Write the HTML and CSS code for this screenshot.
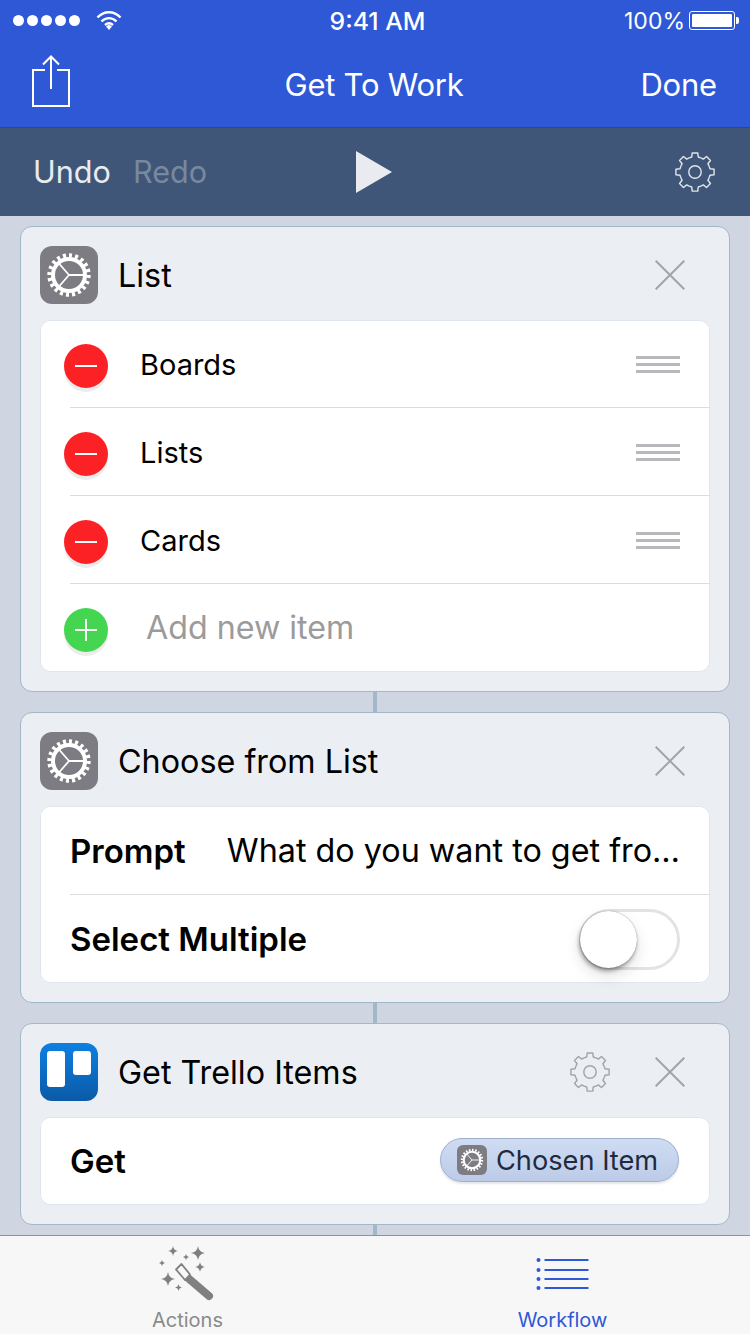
FILE: index.html
```html
<!DOCTYPE html>
<html lang="en">
<head>
    <meta charset="UTF-8">
    <meta name="viewport" content="width=device-width, initial-scale=1.0">
    <title>Get To Work</title>
    <link rel="stylesheet" href="styles.css">
</head>
<body>
    <svg class="defs">
        <symbol id="cog" viewBox="-22 -22 44 44">
            <g fill="none" stroke="currentColor" stroke-width="1.5" stroke-linejoin="round">
                <path id="tooth" d="M-6.12-14.78 -3.4-15.7-2.9-20 2.9-20 3.4-15.7 6.12-14.78"/>
                <use href="#tooth" transform="rotate(45)"/>
                <use href="#tooth" transform="rotate(90)"/>
                <use href="#tooth" transform="rotate(135)"/>
                <use href="#tooth" transform="rotate(180)"/>
                <use href="#tooth" transform="rotate(225)"/>
                <use href="#tooth" transform="rotate(270)"/>
                <use href="#tooth" transform="rotate(315)"/>
                <circle r="6.5"/>
            </g>
        </symbol>
        <symbol id="app-gear" viewBox="-29 -29 58 58">
            <rect x="-29" y="-29" width="58" height="58" rx="12" fill="#7d7c82"/>
            <g fill="none" stroke="#fff">
                <circle r="16" stroke-width="4"/>
                <circle r="19.5" stroke-width="4.4" pathLength="40" stroke-dasharray="1 1"/>
                <path d="M0 0H15M0 0-10-11.5M0 0-10 11.5" stroke-width="1.8"/>
            </g>
        </symbol>
        <symbol id="close" viewBox="0 0 30 30">
            <path d="M.7.7 29.3 29.3M29.3.7.7 29.3" fill="none" stroke="#a4a4a6" stroke-width="2"/>
        </symbol>
        <symbol id="handle" viewBox="0 0 44 18">
            <path d="M0 1.5H44M0 8.5H44M0 15.5H44" stroke="#b8b7bc" stroke-width="3"/>
        </symbol>
        <symbol id="spark" viewBox="-1 -1 2 2">
            <path d="M0-1Q.12-.12 1 0 .12 .12 0 1-.12 .12-1 0-.12-.12 0-1Z" fill="#808080"/>
        </symbol>
    </svg>

    <div class="screen">
        <header class="topbar">
            <div class="status">
                <div class="status-left">
                    <div class="signal"><i></i><i></i><i></i><i></i><i></i></div>
                    <svg class="wifi" width="26" height="19" viewBox="0 0 26 19">
                        <path d="M1.5 6.5C8-.5 18-.5 24.5 6.5M5.5 10.5C10 6 16 6 20.5 10.5M9 14C11.5 11.8 14.5 11.8 17 14" fill="none" stroke="#fff" stroke-width="2.4"/>
                        <path d="M10 15.5 13 13.5 16 15.5 13 19Z" fill="#fff"/>
                    </svg>
                </div>
                <div class="clock">9:41 AM</div>
                <div class="status-right">
                    <span>100%</span>
                    <div class="battery"><b></b></div>
                    <div class="battery-cap"></div>
                </div>
            </div>
            <nav class="nav">
                <svg class="share" width="40" height="53" viewBox="0 0 40 53">
                    <path d="M13 15H1V51H37V15H25M19 34V2M11 9.5 19 1.5 27 9.5" fill="none" stroke="#fff" stroke-width="2"/>
                </svg>
                <div class="nav-title">Get To Work</div>
                <div class="nav-done">Done</div>
            </nav>
        </header>

        <div class="toolbar">
            <div class="history"><span>Undo</span><span class="off">Redo</span></div>
            <div class="play"></div>
            <svg class="tool-cog" width="42" height="42"><use href="#cog"/></svg>
        </div>

        <main class="flow">
            <section class="card">
                <div class="card-head">
                    <svg class="app" width="58" height="58"><use href="#app-gear"/></svg>
                    <h2>List</h2>
                    <svg class="x" width="30" height="30"><use href="#close"/></svg>
                </div>
                <div class="body">
                    <div class="row item">
                        <span class="dot minus"></span><span class="item-name">Boards</span>
                        <svg class="handle" width="44" height="18"><use href="#handle"/></svg>
                    </div>
                    <div class="row item">
                        <span class="dot minus"></span><span class="item-name">Lists</span>
                        <svg class="handle" width="44" height="18"><use href="#handle"/></svg>
                    </div>
                    <div class="row item">
                        <span class="dot minus"></span><span class="item-name">Cards</span>
                        <svg class="handle" width="44" height="18"><use href="#handle"/></svg>
                    </div>
                    <div class="row item">
                        <span class="dot plus"></span><span class="item-new">Add new item</span>
                    </div>
                </div>
            </section>
            <div class="link"></div>

            <section class="card">
                <div class="card-head">
                    <svg class="app" width="58" height="58"><use href="#app-gear"/></svg>
                    <h2>Choose from List</h2>
                    <svg class="x" width="30" height="30"><use href="#close"/></svg>
                </div>
                <div class="body">
                    <div class="row field tall">
                        <span class="label">Prompt</span>
                        <span class="prompt">What do you want to get fro…</span>
                    </div>
                    <div class="row field">
                        <span class="label">Select Multiple</span>
                        <div class="toggle"><div class="knob"></div></div>
                    </div>
                </div>
            </section>
            <div class="link"></div>

            <section class="card">
                <div class="card-head">
                    <svg class="app" width="58" height="58" viewBox="0 0 58 58">
                        <defs>
                            <linearGradient id="trello" x1="0" y1="0" x2="0" y2="1">
                                <stop offset="0" stop-color="#0d80e2"/>
                                <stop offset="1" stop-color="#0b5aa6"/>
                            </linearGradient>
                        </defs>
                        <rect width="58" height="58" rx="12" fill="url(#trello)"/>
                        <rect x="7" y="8" width="18" height="36" rx="3" fill="#fff"/>
                        <rect x="33" y="8" width="18" height="24" rx="3" fill="#fff"/>
                    </svg>
                    <h2>Get Trello Items</h2>
                    <svg class="head-cog" width="42" height="42"><use href="#cog"/></svg>
                    <svg class="x" width="30" height="30"><use href="#close"/></svg>
                </div>
                <div class="body">
                    <div class="row field">
                        <span class="label">Get</span>
                        <div class="pill">
                            <svg width="30" height="30"><use href="#app-gear"/></svg>
                            <span>Chosen Item</span>
                        </div>
                    </div>
                </div>
            </section>
            <div class="link"></div>
        </main>

        <footer class="tabs">
            <div class="tab">
                <svg width="65" height="60" viewBox="0 0 65 60">
                    <use href="#spark" x="13" y="1" width="10" height="10"/>
                    <use href="#spark" x="36" y="1" width="14" height="14"/>
                    <use href="#spark" x="40" y="17" width="10" height="10"/>
                    <use href="#spark" x="6" y="27" width="14" height="14"/>
                    <use href="#spark" x="20" y="39" width="7" height="7"/>
                    <use href="#spark" x="4" y="15" width="6" height="6"/>
                    <use href="#spark" x="28" y="9" width="6" height="6"/>
                    <path d="M33 33 54 51" fill="none" stroke="#808080" stroke-width="8" stroke-linecap="round"/>
                    <path d="M21 24.5 26.5 19 35 29.5 30 35Z" fill="#f7f7f7" stroke="#808080" stroke-width="1.8" stroke-linejoin="round"/>
                </svg>
                <span>Actions</span>
            </div>
            <div class="tab on">
                <svg width="65" height="60" viewBox="0 0 52 60">
                    <g fill="#2e58d6">
                        <circle cx="2" cy="15" r="2"/>
                        <circle cx="2" cy="25" r="2"/>
                        <circle cx="2" cy="34" r="2"/>
                        <circle cx="2" cy="43" r="2"/>
                    </g>
                    <path d="M8 15H52M8 25H52M8 34H52M8 43H52" stroke="#2e58d6" stroke-width="2"/>
                </svg>
                <span>Workflow</span>
            </div>
        </footer>
    </div>
</body>
</html>
```

FILE: styles.css
```css
* {
    box-sizing: border-box;
}

body {
    margin: 0;
    font-family: Inter, "Noto Sans", sans-serif;
    color: #000;
}

.defs {
    display: none;
}

.screen {
    width: 750px;
    height: 1334px;
    display: flex;
    flex-direction: column;
    overflow: hidden;
    background: #cfd6e1;
}

.topbar {
    height: 128px;
    background: #2e58d6;
    border-bottom: 1px solid #27489f;
    color: #fff;
}

.status {
    height: 40px;
    padding: 0 11px 0 13px;
    display: flex;
    align-items: center;
    justify-content: space-between;
}

.status-left {
    width: 240px;
    display: flex;
    align-items: center;
}

.signal {
    display: flex;
    gap: 3px;
}

.signal i {
    width: 11px;
    height: 11px;
    border-radius: 50%;
    background: #fff;
}

.wifi {
    margin-left: 16px;
}

.clock {
    margin-top: 2px;
    margin-left: 3px;
    font-size: 24.8px;
    font-weight: 500;
}

.status-right {
    width: 240px;
    display: flex;
    align-items: center;
    justify-content: flex-end;
}

.status-right span {
    margin-top: 2px;
    font-size: 23px;
}

.battery {
    width: 46px;
    height: 19px;
    margin-left: 4px;
    padding: 2px;
    border: 1px solid #fff;
    border-radius: 3px;
}

.battery b {
    display: block;
    height: 100%;
    background: #fff;
    border-radius: 1px;
}

.battery-cap {
    width: 3px;
    height: 7px;
    margin-left: 1px;
    background: #fff;
    border-radius: 0 2px 2px 0;
}

.nav {
    height: 87px;
    padding: 0 33px 0 31px;
    display: grid;
    grid-template-columns: 1fr auto 1fr;
    align-items: center;
    font-size: 31px;
}

.share {
    margin-top: -4px;
    margin-left: 1px;
}

.nav-title {
    margin-top: 2px;
    letter-spacing: -0.25px;
}

.nav-done {
    margin-top: 2px;
    justify-self: end;
    letter-spacing: -0.2px;
}

.toolbar {
    height: 88px;
    padding: 0 34px;
    display: grid;
    grid-template-columns: 1fr auto 1fr;
    align-items: center;
    background: #3f5678;
    color: #e9ebf0;
    font-size: 30.6px;
}

.history {
    margin-top: -2px;
    margin-left: -1px;
    display: flex;
    gap: 22px;
}

.off {
    color: #78899f;
}

.play {
    width: 0;
    height: 0;
    margin-left: -2px;
    border-left: 36px solid #e9ebf0;
    border-top: 21px solid transparent;
    border-bottom: 21px solid transparent;
}

.tool-cog {
    justify-self: end;
    color: #dfe3ea;
}

.flow {
    flex: 1;
    min-height: 0;
    overflow: hidden;
    padding: 10px 20px 0;
}

.card {
    background: #ebeef3;
    border: 1px solid #a3b7c8;
    border-radius: 12px;
    padding: 0 19px 19px;
}

.link {
    width: 4px;
    height: 20px;
    margin: 0 auto;
    background: #a3b7c8;
}

.card-head {
    height: 93px;
    padding-top: 19px;
    padding-bottom: 16px;
    display: flex;
    align-items: center;
}

.card-head h2 {
    flex: 1;
    margin: 0 0 0 20px;
    font-size: 32.3px;
    font-weight: 400;
}

.app {
    flex: none;
}

.x {
    margin-right: 25px;
}

.head-cog {
    margin-right: 44px;
    color: #a4a4a6;
}

.body {
    background: #fff;
    border-radius: 10px;
    box-shadow: inset 0 0 0 1px #dfe5ec;
}

.row {
    height: 88px;
    display: flex;
    align-items: center;
    position: relative;
}

.row + .row::before {
    content: "";
    position: absolute;
    top: -1px;
    left: 30px;
    right: 0;
    height: 1px;
    background: #dcdcde;
}

.item {
    padding: 0 30px 0 24px;
}

.dot {
    flex: none;
    width: 44px;
    height: 44px;
    margin-top: 4px;
    border-radius: 50%;
    position: relative;
    box-shadow: 0 4px 0 #ececec;
}

.minus {
    background: #fc2125;
}

.plus {
    background: #44d551;
}

.dot::before {
    content: "";
    position: absolute;
    top: 21px;
    left: 11px;
    width: 22px;
    height: 2px;
    background: #fff;
}

.plus::after {
    content: "";
    position: absolute;
    top: 11px;
    left: 21px;
    width: 2px;
    height: 22px;
    background: #fff;
}

.item-name {
    flex: 1;
    margin-left: 32px;
    font-size: 29px;
}

.handle {
    margin-top: 2px;
}

.item-new {
    margin-left: 38px;
    margin-top: -2px;
    font-size: 32.2px;
    color: #9b9b9b;
}

.field {
    padding: 0 30px;
    justify-content: space-between;
}

.tall {
    height: 89px;
}

.label {
    font-size: 33px;
    font-weight: 600;
}

.prompt {
    font-size: 32.3px;
}

.toggle {
    width: 101px;
    height: 61px;
    border: 3px solid #e3e3e3;
    border-radius: 31px;
    position: relative;
}

.knob {
    position: absolute;
    top: -1px;
    left: -2px;
    width: 57px;
    height: 57px;
    border-radius: 50%;
    background: #fff;
    box-shadow: 0 0 1px rgba(0, 0, 0, 0.5), -1px 3px 4px rgba(0, 0, 0, 0.35), 0 8px 16px rgba(0, 0, 0, 0.12);
}

.pill {
    width: 239px;
    height: 44px;
    margin-top: -2px;
    margin-right: 1px;
    padding-left: 16px;
    display: flex;
    align-items: center;
    gap: 9px;
    border: 1px solid #9eb0cf;
    border-radius: 22px;
    background: linear-gradient(#cfdcf2, #bccbe8);
    box-shadow: 0 2px 2px rgba(0, 0, 0, 0.1);
    color: #1e2a3f;
    font-size: 27.2px;
}

.tabs {
    height: 99px;
    display: grid;
    grid-template-columns: 1fr 1fr;
    background: #f7f7f7;
    border-top: 1px solid #929292;
}

.tab {
    display: flex;
    flex-direction: column;
    align-items: center;
    padding-top: 9px;
    font-size: 20px;
    color: #8a8a8a;
}

.tab span {
    margin-top: 3px;
}

.tab.on {
    color: #2e58d6;
}
```
